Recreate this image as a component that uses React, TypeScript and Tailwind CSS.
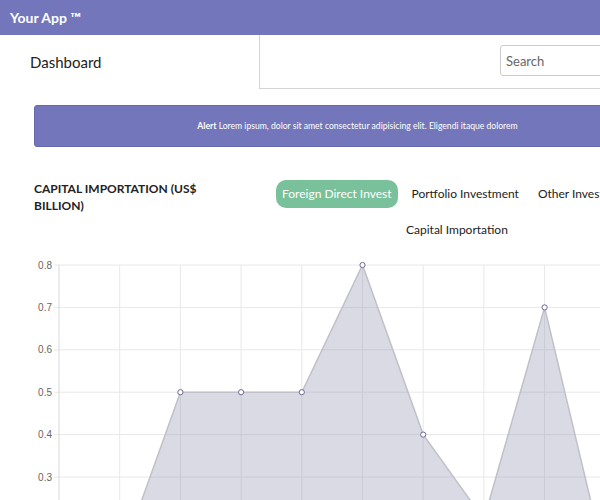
import React from "react";

const data = [0, 0.1, 0.5, 0.5, 0.5, 0.8, 0.4, 0.2, 0.7, 0.1];
const ticks = [0.8, 0.7, 0.6, 0.5, 0.4, 0.3, 0.2, 0.1, 0];

const xAt = (i: number) => 59 + i * 60.7;
const yAt = (v: number) => 10 + (0.8 - v) * 424;

function Chart() {
  const line = data.map((v, i) => `${xAt(i)},${yAt(v)}`).join(" ");
  const area = `${xAt(0)},${yAt(0)} ${line} ${xAt(data.length - 1)},${yAt(0)}`;
  return (
    <svg width="700" height="400" className="block">
      {/* horizontal grid + labels */}
      {ticks.map((t) => (
        <g key={t}>
          <line x1="54" x2="700" y1={yAt(t)} y2={yAt(t)} stroke="#e8e8e8" strokeWidth="1" />
          <text
            x="52"
            y={yAt(t) + 3.5}
            textAnchor="end"
            fontSize="10"
            fill="#666"
            fontFamily="'Liberation Sans', Arial, sans-serif"
          >
            {t.toFixed(1)}
          </text>
        </g>
      ))}
      {/* vertical grid */}
      {data.map((_, i) => (
        <line
          key={i}
          x1={xAt(i)}
          x2={xAt(i)}
          y1={yAt(0.8)}
          y2="400"
          stroke={i === 0 ? "#d8d8d8" : "#e8e8e8"}
          strokeWidth="1"
        />
      ))}
      <polygon points={area} fill="rgba(150,150,178,0.35)" />
      <polyline points={line} fill="none" stroke="#c0c0c8" strokeWidth="1.5" />
      {data.map((v, i) => (
        <circle key={i} cx={xAt(i)} cy={yAt(v)} r="2.6" fill="#fff" stroke="#6b6896" strokeWidth="1" />
      ))}
    </svg>
  );
}

export default function App() {
  return (
    <div className="w-[600px] h-[500px] overflow-hidden bg-white font-['Lato','Noto_Sans',sans-serif]">
      {/* top bar */}
      <div className="h-[35px] bg-[#7376ba] flex items-center px-[10px] w-[700px]">
        <span className="text-white font-bold text-[14px]">Your App ™</span>
      </div>

      {/* nav row */}
      <div className="flex w-[700px] h-[54px]">
        <div className="w-[261px] flex items-center pl-[30px] text-[15px] text-[#222]">Dashboard</div>
        <div className="flex-1 border-l border-b border-[#d4d4d4] pt-[10px] pl-[240px]">
          <input
            placeholder="Search"
            className="w-[200px] h-[31px] border border-[#ccc] rounded-[3px] px-[5px] text-[13px] placeholder:text-[#666] outline-none"
          />
        </div>
      </div>

      {/* alert */}
      <div className="ml-[34px] mt-[16px] w-[647px] h-[42px] bg-[#7376ba] border border-[#6669ad] rounded-[3px] flex items-center justify-center text-white text-[8.6px]">
        <span>
          <b>Alert</b> Lorem ipsum, dolor sit amet consectetur adipisicing elit. Eligendi itaque dolorem
        </span>
      </div>

      {/* section header */}
      <div className="flex mt-[33px] w-[760px]">
        <div className="w-[210px] shrink-0 pl-[34px] text-[12px] font-bold leading-[17px] text-[#222]">
          CAPITAL IMPORTATION (US$ BILLION)
        </div>
        <div className="flex flex-col ml-[66px]">
          <div className="flex items-center">
            <span className="h-[28px] px-[6px] rounded-[10px] bg-[#78c19a] text-white text-[12px] flex items-center">
              Foreign Direct Invest
            </span>
            <span className="h-[28px] px-[7px] ml-[7px] text-[#222] text-[12px] flex items-center">
              Portfolio Investment
            </span>
            <span className="h-[28px] px-[7px] ml-[5px] text-[#222] text-[12px] flex items-center">
              Other Investment
            </span>
          </div>
          <div className="flex mt-[8px] pl-[123px]">
            <span className="h-[28px] px-[7px] text-[#222] text-[12px] flex items-center">
              Capital Importation
            </span>
          </div>
        </div>
      </div>

      {/* chart */}
      <div className="mt-[11px]">
        <Chart />
      </div>
    </div>
  );
}
